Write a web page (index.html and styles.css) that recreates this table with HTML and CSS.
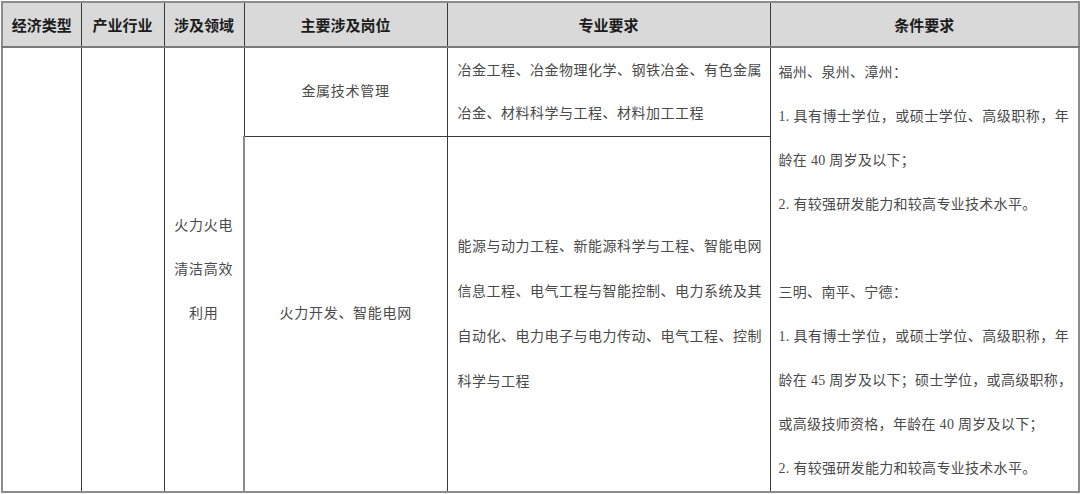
FILE: index.html
```html
<!DOCTYPE html>
<html lang="zh-CN">
<head>
<meta charset="utf-8">
<title>岗位要求</title>
<link rel="stylesheet" href="styles.css">
</head>
<body>
<div class="page">
<table class="req">
  <colgroup>
    <col class="c1"><col class="c2"><col class="c3"><col class="c4"><col class="c5"><col class="c6">
  </colgroup>
  <thead>
    <tr>
      <th>经济类型</th>
      <th>产业行业</th>
      <th>涉及领域</th>
      <th>主要涉及岗位</th>
      <th>专业要求</th>
      <th>条件要求</th>
    </tr>
  </thead>
  <tbody>
    <tr class="r1">
      <td rowspan="2"></td>
      <td rowspan="2"></td>
      <td rowspan="2" class="center">火力火电<br>清洁高效<br>利用</td>
      <td class="center">金属技术管理</td>
      <td class="text t1">
        <span class="ln just">冶金工程、冶金物理化学、钢铁冶金、有色金属</span>
        <span class="ln">冶金、材料科学与工程、材料加工工程</span>
      </td>
      <td rowspan="2" class="text cond">
        <span class="ln">福州、泉州、漳州：</span>
        <span class="ln just">1. 具有博士学位，或硕士学位、高级职称，年</span>
        <span class="ln">龄在 40 周岁及以下；</span>
        <span class="ln">2. 有较强研发能力和较高专业技术水平。</span>
        <span class="ln">&nbsp;</span>
        <span class="ln">三明、南平、宁德：</span>
        <span class="ln just">1. 具有博士学位，或硕士学位、高级职称，年</span>
        <span class="ln just">龄在 45 周岁及以下；硕士学位，或高级职称，</span>
        <span class="ln">或高级技师资格，年龄在 40 周岁及以下；</span>
        <span class="ln">2. 有较强研发能力和较高专业技术水平。</span>
      </td>
    </tr>
    <tr class="r2">
      <td class="center">火力开发、智能电网</td>
      <td class="text t2">
        <span class="ln just">能源与动力工程、新能源科学与工程、智能电网</span>
        <span class="ln just">信息工程、电气工程与智能控制、电力系统及其</span>
        <span class="ln just">自动化、电力电子与电力传动、电气工程、控制</span>
        <span class="ln">科学与工程</span>
      </td>
    </tr>
  </tbody>
</table>
</div>
</body>
</html>
```
FILE: styles.css
```css
html, body {
  margin: 0;
  padding: 0;
  background: #ffffff;
}

.page {
  padding: 1px 0 0 1px;
}

.req {
  width: 1077px;
  border-collapse: collapse;
  table-layout: fixed;
  border: 2px solid #8c8c8c;
  font-family: "Liberation Serif", "Noto Sans CJK SC", sans-serif;
  color: #4a4a4a;
  font-size: 14px;
}

.c1 { width: 79px; }
.c2 { width: 83px; }
.c3 { width: 80px; }
.c4 { width: 203px; }
.c5 { width: 323px; }
.c6 { width: 309px; }

.req th {
  height: 43px;
  padding: 0;
  background: #d9d9d9;
  font-family: "Noto Sans CJK SC", sans-serif;
  font-weight: 700;
  font-size: 15px;
  color: #1c1c1c;
  text-align: center;
  vertical-align: middle;
  border-left: 1px solid #3a3a3a;
  border-bottom: 2px solid #7a7a7a;
}

.req td {
  padding: 0;
  border-left: 1px solid #3a3a3a;
  border-top: 1px solid #3a3a3a;
  vertical-align: middle;
}

.req th:first-child,
.req td:first-child {
  border-left: 2px solid #8c8c8c;
}

.r1 { height: 89px; }
.r2 { height: 352px; }

.center {
  text-align: center;
  line-height: 44px;
  letter-spacing: 0.7px;
}

.text {
  padding: 0 8px 0 10px !important;
  line-height: 44px;
  letter-spacing: 0.5px;
}

.t1 { line-height: 43px; }
.t2 { line-height: 45px; }

.cond {
  padding: 3px 9px 0 8px !important;
  line-height: 44px;
  letter-spacing: 0.3px;
  border-left: 1px solid #3a3a3a !important;
}

.ln {
  display: block;
  white-space: nowrap;
}

.ln.just {
  text-align: justify;
  text-align-last: justify;
}
```
